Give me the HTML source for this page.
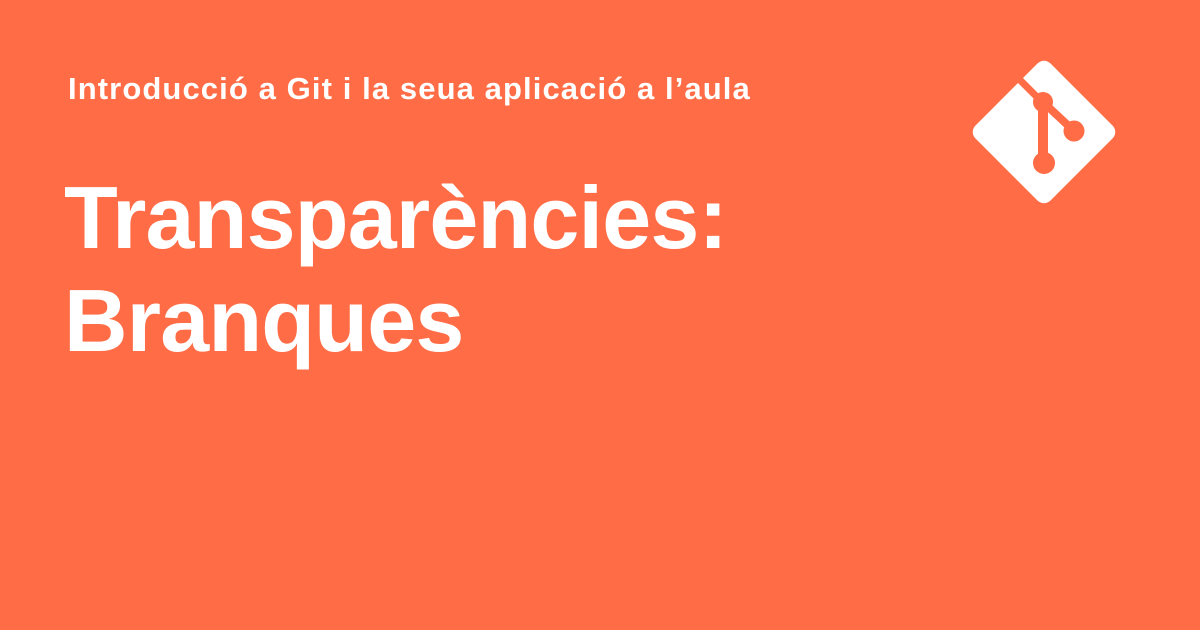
<!DOCTYPE html>
<html><head><style>
body{margin:0;width:1200px;height:630px;background:#FF6C45;overflow:hidden;font-family:"Liberation Sans",sans-serif;color:#fff;position:relative}
.sub{position:absolute;left:68px;top:71px;font-size:31px;font-weight:bold;letter-spacing:1.1px;white-space:nowrap}
.t{position:absolute;left:64px;top:166px;font-size:88px;font-weight:bold;line-height:103px;letter-spacing:-0.8px}
svg{position:absolute;left:0;top:0}
</style></head><body>
<div class="sub">Introducció a Git i la seua aplicació a l’aula</div>
<div class="t">Transparències:<br>Branques</div>
<svg width="1200" height="630">
<rect x="991" y="79" width="106" height="106" rx="9" fill="#fff" transform="rotate(45 1044 132)"/>
<line x1="1014" y1="74" x2="1043" y2="103" stroke="#FF6C45" stroke-width="7"/>
<line x1="1043" y1="102" x2="1043" y2="163" stroke="#FF6C45" stroke-width="10"/>
<line x1="1043" y1="102" x2="1074" y2="131" stroke="#FF6C45" stroke-width="8"/>
<circle cx="1043" cy="102" r="10" fill="#FF6C45"/>
<circle cx="1074" cy="131" r="10.5" fill="#FF6C45"/>
<circle cx="1044" cy="163" r="11" fill="#FF6C45"/>
</svg>
</body></html>
